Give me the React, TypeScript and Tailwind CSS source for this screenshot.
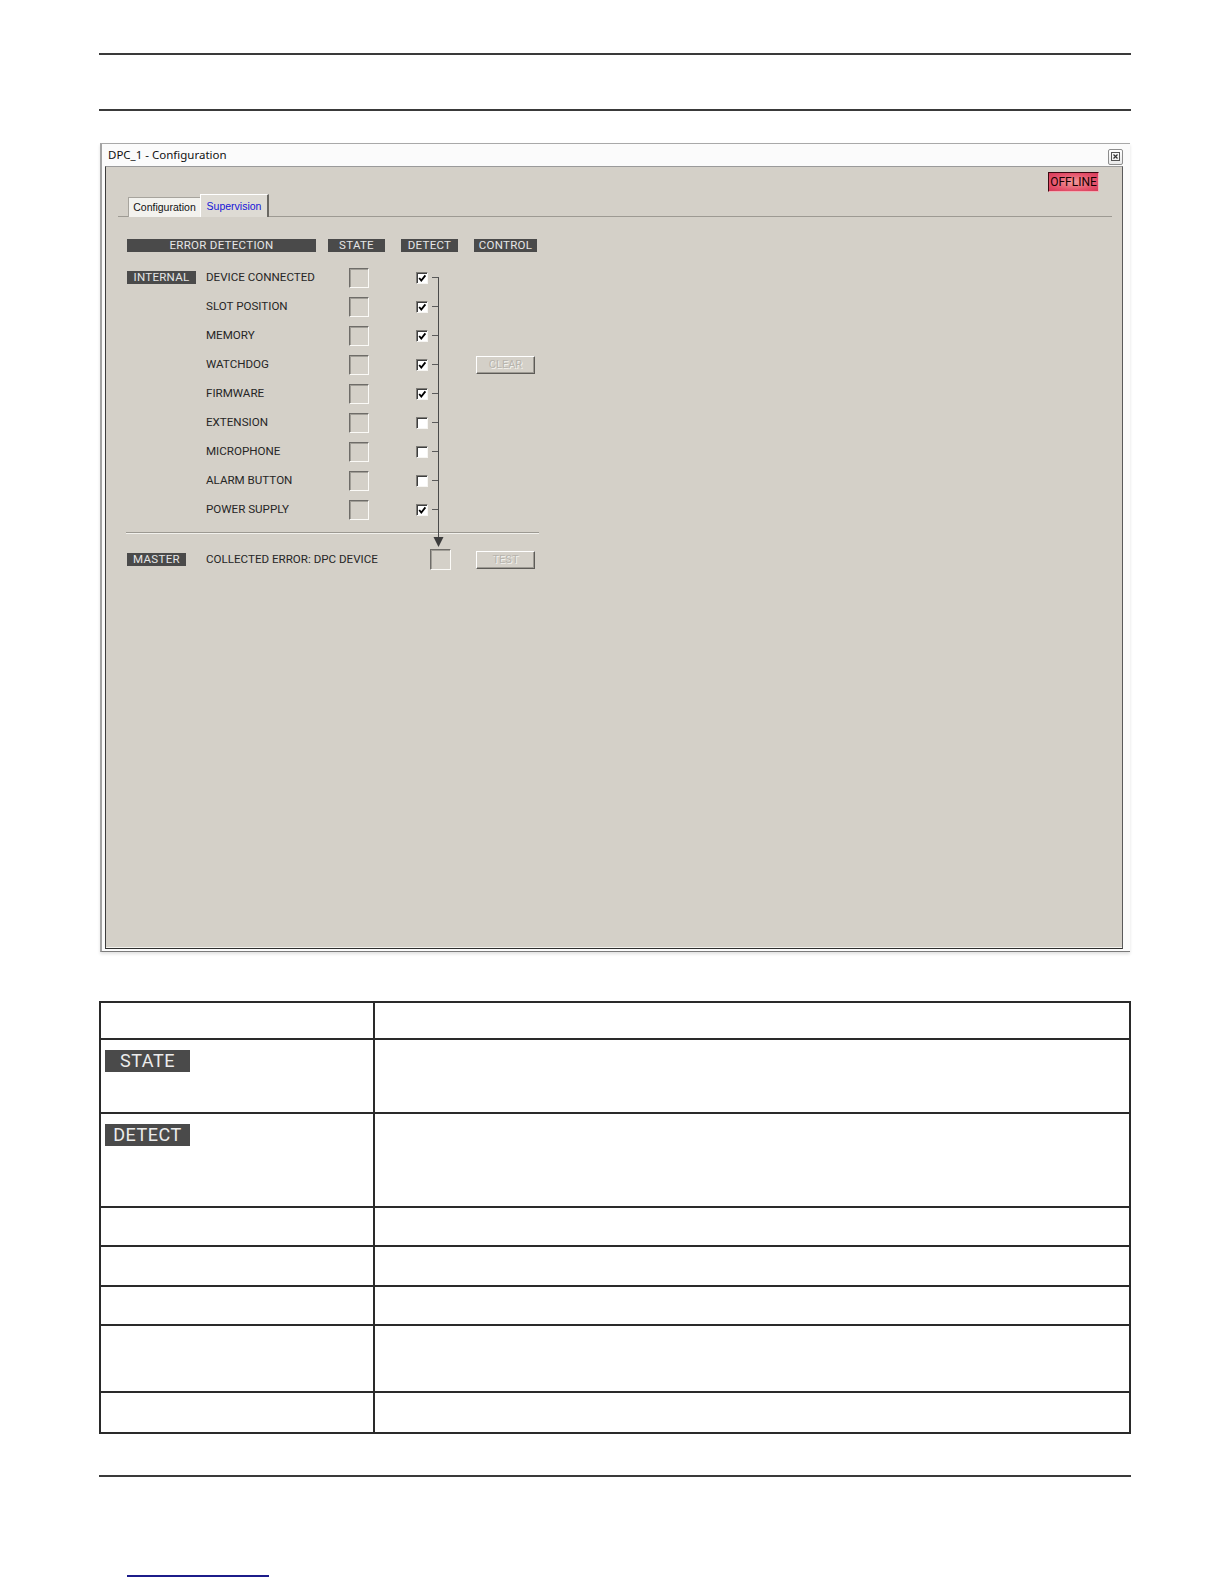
import React from 'react';

const rows = [
  { label: 'DEVICE CONNECTED', on: true },
  { label: 'SLOT POSITION', on: true },
  { label: 'MEMORY', on: true },
  { label: 'WATCHDOG', on: true, clear: true },
  { label: 'FIRMWARE', on: true },
  { label: 'EXTENSION', on: false },
  { label: 'MICROPHONE', on: false },
  { label: 'ALARM BUTTON', on: false },
  { label: 'POWER SUPPLY', on: true },
];

const Badge = ({ children, className }: { children: React.ReactNode; className: string }) => (
  <div
    className={`flex h-[13px] items-center justify-center bg-[#4a4a4a] pt-px font-['Roboto',sans-serif] text-[11.5px] leading-none tracking-[0.3px] text-[#e6e6e6] ${className}`}
  >
    {children}
  </div>
);

const StateBox = ({ big }: { big?: boolean }) => (
  <div
    className={`${big ? 'h-[21px] w-[21px]' : 'h-5 w-5'} border border-t-[#6e6c68] border-l-[#6e6c68] border-b-[#fbfaf7] border-r-[#fbfaf7] shadow-[inset_1px_1px_0_#a19e97]`}
  />
);

const Check = ({ on }: { on: boolean }) => (
  <div className="flex h-3 w-3 items-center justify-center border border-t-[#7f7d78] border-l-[#7f7d78] border-b-[#f6f5f2] border-r-[#f6f5f2] bg-white shadow-[inset_1px_1px_0_#3f3f3f]">
    {on && (
      <svg viewBox="0 0 10 10" className="h-[10px] w-[10px]">
        <path d="M2.2 5 L4.3 7.6 L8.4 2.4" fill="none" stroke="#000" strokeWidth="1.8" />
      </svg>
    )}
  </div>
);

const Btn = ({ label }: { label: string }) => (
  <div className="flex h-[18px] w-[59px] items-center justify-center border border-t-white border-l-white border-b-[#5d5b57] border-r-[#5d5b57] bg-[#d4d0c8] font-['Roboto',sans-serif] text-[11px] leading-none text-[#b7b4ad] shadow-[inset_-1px_-1px_0_#9e9b94] [text-shadow:1px_1px_0_#f3f2ee]">
    {label}
  </div>
);

const Connector = () => (
  <svg className="pointer-events-none absolute top-0 left-0" width="330" height="300">
    {rows.map((_, i) => (
      <line key={i} x1="305" x2="312" y1={14.5 + 29 * i} y2={14.5 + 29 * i} stroke="#5a5a5a" strokeWidth="1" />
    ))}
    <line x1="311.5" x2="311.5" y1="14.5" y2="276" stroke="#4a4a4a" strokeWidth="1" />
    <polygon points="306.5,274 316.5,274 311.5,284" fill="#3c3c3c" />
  </svg>
);

const Window = () => (
  <div className="ml-px flex h-[809px] w-[1030px] flex-col border-t border-l-2 border-b border-t-[#a9a9a9] border-l-[#a3a3a3] border-b-[#7b7b7b] bg-[#fbfbfb] pr-[7px] pb-[2px] shadow-[0_2px_3px_rgba(0,0,0,0.12)]">
    <div className="flex h-[22px] items-center justify-between pl-[6px]">
      <span className="font-['Noto_Sans',sans-serif] text-[11.5px] leading-none text-[#111]">DPC_1 - Configuration</span>
      <div className="mt-[3px] flex h-4 w-[15px] items-center justify-center rounded-[2px] border border-[#8d8d8d] bg-gradient-to-b from-white to-[#e9e9e9]">
        <svg viewBox="0 0 9 9" className="h-[9px] w-[9px]">
          <rect x="0.5" y="0.5" width="8" height="8" fill="none" stroke="#555" strokeWidth="1" />
          <path d="M2.5 2.5 L6.5 6.5 M6.5 2.5 L2.5 6.5" stroke="#333" strokeWidth="1.2" />
        </svg>
      </div>
    </div>
    <div className="ml-[3px] flex flex-1 flex-col border border-t-[#9a9a9a] border-l-[#3d3d3d] border-r-[#5a5a5a] border-b-[#2f2f2f] bg-[#d4d0c8] shadow-[inset_0_-1px_0_#f4f3ef]">
      <div className="flex justify-end pt-[5px] pr-[23px]">
        <div className="flex h-5 w-[51px] items-center justify-center border border-t-[#3a0a12] border-l-[#3a0a12] border-b-[#f0b0b8] border-r-[#f0b0b8] bg-[radial-gradient(ellipse_at_center,#f39a9a_0%,#e4506a_65%,#d63a58_100%)] font-['Roboto',sans-serif] text-[12px] leading-none text-[#160000]">
          OFFLINE
        </div>
      </div>

      <div className="mt-[2px] mr-[10px] ml-[12px] flex h-[23px] items-end border-b border-[#9d9a93] pl-[10px]">
        <div className="-mb-px flex h-5 w-[72px] items-center justify-center border-t border-l border-t-[#a7a49d] border-l-[#a7a49d] bg-[#f3f2ee] font-['Liberation_Sans',sans-serif] text-[10.5px] leading-none text-[#111]">
          Configuration
        </div>
        <div className="-mb-px flex h-[23px] w-[69px] items-center justify-center border-t border-l border-r-2 border-t-white border-l-white border-r-[#6a6863] bg-[#dedbd4] font-['Liberation_Sans',sans-serif] text-[10.5px] leading-none text-[#1515d8]">
          Supervision
        </div>
      </div>

      <div className="mt-[22px] ml-[21px] flex">
        <Badge className="w-[189px]">ERROR DETECTION</Badge>
        <Badge className="ml-3 w-[57px]">STATE</Badge>
        <Badge className="ml-4 w-[57px]">DETECT</Badge>
        <Badge className="ml-4 w-[63px]">CONTROL</Badge>
      </div>

      <div className="relative mt-[11px] ml-[21px]">
        <Connector />
        {rows.map((r, i) => (
          <div key={r.label} className="flex h-[29px] items-center">
            <div className="w-[80px]">{i === 0 && <Badge className="w-[69px]">INTERNAL</Badge>}</div>
            <div className="w-[142px] -translate-x-px font-['Roboto',sans-serif] text-[11.6px] leading-none text-[#262626]">{r.label}</div>
            <StateBox />
            <div className="ml-[47px]">
              <Check on={r.on} />
            </div>
            <div className="ml-[48px]">{r.clear && <Btn label="CLEAR" />}</div>
          </div>
        ))}
        <div className="mt-2 -ml-px h-[2px] w-[413px] border-t border-[#9c9992] bg-[#f2f1ed]" />
        <div className="mt-[11px] flex h-[29px] items-center">
          <div className="w-[80px]">
            <Badge className="w-[59px]">MASTER</Badge>
          </div>
          <div className="w-[223px] -translate-x-px font-['Roboto',sans-serif] text-[11.6px] leading-none text-[#262626]">
            COLLECTED ERROR: DPC DEVICE
          </div>
          <StateBox big />
          <div className="ml-[25px]">
            <Btn label="TEST" />
          </div>
        </div>
      </div>
    </div>
  </div>
);

const tableRows = [39, 74, 94, 39, 40, 39, 67, 39];

const BigBadge = ({ label }: { label: string }) => (
  <div className="mt-[10px] ml-[4px] flex h-[22px] w-[85px] items-center justify-center bg-[#4a4a4a] font-['Roboto',sans-serif] text-[18px] leading-none tracking-[0.5px] text-[#ececec]">
    {label}
  </div>
);

export default function App() {
  return (
    <div className="min-h-[1584px] bg-white pt-[53px] pl-[99px]">
      <div className="w-[1032px]">
        <div className="h-[2px] bg-[#3a3a3a]" />
        <div className="mt-[54px] h-[2px] bg-[#3a3a3a]" />
        <div className="mt-[32px]">
          <Window />
        </div>
        <div className="mt-[49px] border-2 border-[#2a2a2a]">
          {tableRows.map((h, i) => (
            <div
              key={i}
              className={`flex ${i < tableRows.length - 1 ? 'border-b-2 border-[#2a2a2a]' : ''}`}
              style={{ height: i === 0 ? h - 2 : h }}
            >
              <div className="w-[274px] border-r-2 border-[#2a2a2a]">
                {i === 1 && <BigBadge label="STATE" />}
                {i === 2 && <BigBadge label="DETECT" />}
              </div>
              <div className="flex-1" />
            </div>
          ))}
        </div>
        <div className="mt-[41px] h-[2px] bg-[#3a3a3a]" />
        <div className="mt-[98px] ml-[28px] h-[2px] w-[142px] bg-[#1c1c8a]" />
      </div>
    </div>
  );
}
